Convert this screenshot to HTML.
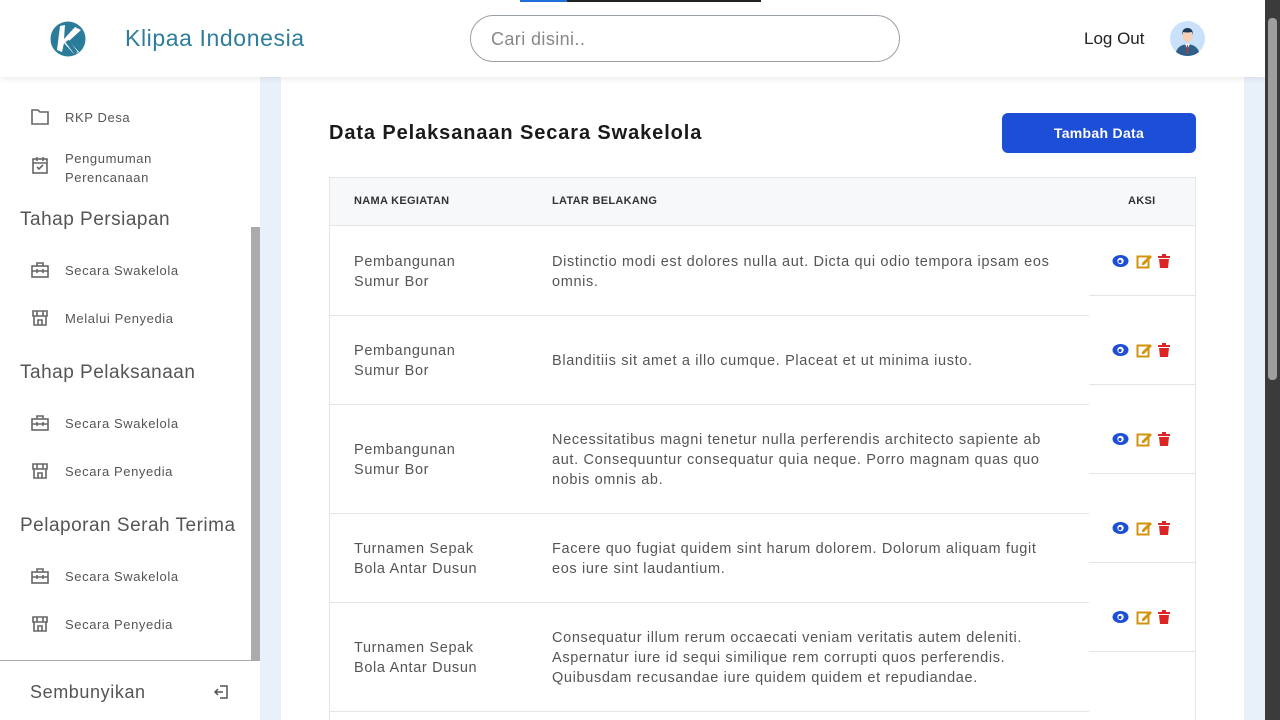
<!DOCTYPE html>
<html><head><meta charset="utf-8"><style>
*{box-sizing:border-box;margin:0;padding:0}
html,body{width:1280px;height:720px;overflow:hidden}
body{background:#e8f0fa;font-family:"Liberation Sans",sans-serif;position:relative;color:#333}
.a{position:absolute}
.hdr{left:0;top:0;width:1265px;height:77px;background:#fff;box-shadow:0 2px 6px rgba(0,0,0,.08);z-index:5}
.side{left:0;top:77px;width:260px;height:643px;background:#fff}
.main{left:281px;top:77px;width:963px;height:643px;background:#fff;overflow:hidden}
.si{font-size:13px;color:#555;letter-spacing:.6px}
.sh{font-size:19px;color:#555;left:20px;letter-spacing:.5px}
.ic{left:30px;width:20px;height:20px}
.t{font-size:14.5px;color:#555;line-height:20px;letter-spacing:.65px}
.hl{height:1px;background:#e2e5ea}
</style></head><body>
<div class="a" style="left:520px;top:0;width:47px;height:2px;background:#1e6fd9;z-index:9"></div>
<div class="a" style="left:567px;top:0;width:194px;height:2px;background:#222;z-index:9"></div>
<div class="a hdr">
  <svg class="a" style="left:50px;top:21px" width="36" height="36" viewBox="0 0 36 36"><circle cx="18" cy="18" r="17.5" fill="#2b7b9b"/><path d="M10 5 L15 4 L14 18 L25 6 L31 9 L19 20 L29 31 L24 33 L14 22 L12 31 L7 29 Z" fill="#fff"/><path d="M17 20 L26 32" stroke="#2b7b9b" stroke-width="4"/></svg>
  <div class="a" style="left:125px;top:25px;font-size:23px;color:#2e7d9c;letter-spacing:.6px">Klipaa Indonesia</div>
  <div class="a" style="left:470px;top:15px;width:430px;height:47px;border:1px solid #9aa0a8;border-radius:24px;"><span class="a" style="left:20px;top:13px;font-size:18px;color:#888;letter-spacing:.4px">Cari disini..</span></div>
  <div class="a" style="left:1084px;top:29px;font-size:17px;color:#222">Log Out</div>
  <svg class="a" style="left:1170px;top:21px" width="35" height="35" viewBox="0 0 35 35"><circle cx="17.5" cy="17.5" r="17.5" fill="#c9e1fb"/><path d="M6 31 Q8 24 17.5 23 Q27 24 29 31 Q24 35 17.5 35 Q11 35 6 31Z" fill="#2e5f8a"/><path d="M15 23 L17.5 28 L20 23Z" fill="#fff"/><path d="M17 24 L18 24 L18.5 31 L17.5 33 L16.5 31Z" fill="#c0392b"/><ellipse cx="17.5" cy="15" rx="5" ry="6" fill="#f6cfb7"/><path d="M12 14 Q12 7 17.5 7 Q23 7 23 14 L22 11 Q17 12 13 11Z" fill="#1e3a56"/></svg>
</div>
<div class="a" style="left:1265px;top:0;width:15px;height:720px;background:#3b3b3b"></div>
<div class="a" style="left:1268px;top:18px;width:9px;height:362px;background:#9e9e9e;border-radius:4px"></div>
<div class="a side">
  <div class="a" style="left:251px;top:150px;width:9px;height:433px;background:#ababab"></div>
  <svg class="a ic" style="top:30px" viewBox="0 0 20 20"><path d="M2 3h6l2 2h8v12H2z" fill="none" stroke="#666" stroke-width="1.6"/></svg>
  <div class="a si" style="left:65px;top:33px">RKP Desa</div>
  <svg class="a ic" style="top:78px" viewBox="0 0 20 20"><rect x="3" y="4" width="14" height="14" fill="none" stroke="#666" stroke-width="1.6"/><path d="M3 8h14M7 2v4M13 2v4M7 12l2 2 4-4" stroke="#666" stroke-width="1.6" fill="none"/></svg>
  <div class="a si" style="left:65px;top:72px;line-height:19px">Pengumuman<br>Perencanaan</div>
  <div class="a sh" style="top:132px">Tahap Persiapan</div>
  <svg class="a ic" style="top:183px" viewBox="0 0 20 20"><rect x="2" y="6" width="16" height="11" fill="none" stroke="#666" stroke-width="1.6"/><path d="M7 6V3h6v3M2 11h16M7 9v4M13 9v4" stroke="#666" stroke-width="1.6" fill="none"/></svg>
  <div class="a si" style="left:65px;top:186px">Secara Swakelola</div>
  <svg class="a ic" style="top:231px" viewBox="0 0 20 20"><path d="M3 3h14v5H3zM7 3v5M13 3v5M4 8v9h12V8M8 17v-5h4v5" stroke="#666" stroke-width="1.6" fill="none"/></svg>
  <div class="a si" style="left:65px;top:234px">Melalui Penyedia</div>
  <div class="a sh" style="top:285px">Tahap Pelaksanaan</div>
  <svg class="a ic" style="top:336px" viewBox="0 0 20 20"><rect x="2" y="6" width="16" height="11" fill="none" stroke="#666" stroke-width="1.6"/><path d="M7 6V3h6v3M2 11h16M7 9v4M13 9v4" stroke="#666" stroke-width="1.6" fill="none"/></svg>
  <div class="a si" style="left:65px;top:339px">Secara Swakelola</div>
  <svg class="a ic" style="top:384px" viewBox="0 0 20 20"><path d="M3 3h14v5H3zM7 3v5M13 3v5M4 8v9h12V8M8 17v-5h4v5" stroke="#666" stroke-width="1.6" fill="none"/></svg>
  <div class="a si" style="left:65px;top:387px">Secara Penyedia</div>
  <div class="a sh" style="top:438px">Pelaporan Serah Terima</div>
  <svg class="a ic" style="top:489px" viewBox="0 0 20 20"><rect x="2" y="6" width="16" height="11" fill="none" stroke="#666" stroke-width="1.6"/><path d="M7 6V3h6v3M2 11h16M7 9v4M13 9v4" stroke="#666" stroke-width="1.6" fill="none"/></svg>
  <div class="a si" style="left:65px;top:492px">Secara Swakelola</div>
  <svg class="a ic" style="top:537px" viewBox="0 0 20 20"><path d="M3 3h14v5H3zM7 3v5M13 3v5M4 8v9h12V8M8 17v-5h4v5" stroke="#666" stroke-width="1.6" fill="none"/></svg>
  <div class="a si" style="left:65px;top:540px">Secara Penyedia</div>
  <div class="a" style="left:0;top:583px;width:260px;height:60px;background:#fff;border-top:1px solid #aaa"></div>
  <div class="a" style="left:30px;top:605px;font-size:18px;color:#555;letter-spacing:.6px">Sembunyikan</div>
  <svg class="a" style="left:212px;top:606px" width="18" height="18" viewBox="0 0 18 18"><path d="M8 3h7v12H8M11 9H3M6 6L3 9l3 3" stroke="#555" stroke-width="1.5" fill="none"/></svg>
</div>
<div class="a main">
  <div class="a" style="left:48px;top:45px;font-size:20px;font-weight:bold;color:#1a1a1a;letter-spacing:.9px">Data Pelaksanaan Secara Swakelola</div>
  <div class="a" style="left:721px;top:36px;width:194px;height:40px;background:#1d4ed8;border-radius:6px;color:#fff;font-size:14px;font-weight:bold;text-align:center;line-height:40px;letter-spacing:.3px">Tambah Data</div>
  <div class="a" style="left:48px;top:100px;width:867px;height:543px;border:1px solid #e2e5ea;border-bottom:none"></div>
  <div class="a" style="left:49px;top:101px;width:865px;height:48px;background:#f7f8fa;border-bottom:1px solid #e2e5ea"></div>
  <div class="a" style="left:73px;top:118px;font-size:11px;font-weight:bold;color:#333;letter-spacing:.3px">NAMA KEGIATAN</div>
  <div class="a" style="left:271px;top:118px;font-size:11px;font-weight:bold;color:#333;letter-spacing:.3px">LATAR BELAKANG</div>
  <div class="a" style="left:847px;top:118px;font-size:11px;font-weight:bold;color:#333;letter-spacing:.3px">AKSI</div>
</div>
<div id="rows"></div>
<script>
var R=[[226,315,"Pembangunan<br>Sumur Bor","Distinctio modi est dolores nulla aut. Dicta qui odio tempora ipsam eos<br>omnis."],
[315,404,"Pembangunan<br>Sumur Bor","Blanditiis sit amet a illo cumque. Placeat et ut minima iusto."],
[404,513,"Pembangunan<br>Sumur Bor","Necessitatibus magni tenetur nulla perferendis architecto sapiente ab<br>aut. Consequuntur consequatur quia neque. Porro magnam quas quo<br>nobis omnis ab."],
[513,602,"Turnamen Sepak<br>Bola Antar Dusun","Facere quo fugiat quidem sint harum dolorem. Dolorum aliquam fugit<br>eos iure sint laudantium."],
[602,711,"Turnamen Sepak<br>Bola Antar Dusun","Consequatur illum rerum occaecati veniam veritatis autem deleniti.<br>Aspernatur iure id sequi similique rem corrupti quos perferendis.<br>Quibusdam recusandae iure quidem quidem et repudiandae."]];
var h="";
R.forEach(function(r,i){var c=(r[0]+r[1])/2+1;var lines=r[3].split("<br>").length;
h+='<div class="a t" style="left:354px;top:'+(c-20)+'px">'+r[2]+'</div>';
h+='<div class="a t" style="left:552px;top:'+(c-lines*10)+'px">'+r[3]+'</div>';
h+='<div class="a hl" style="left:330px;top:'+r[1]+'px;width:759px"></div>';
var ay=226+89*i;
h+='<div class="a hl" style="left:1089px;top:'+(ay+69)+'px;width:106px"></div>';
h+='<svg class="a" style="left:1112px;top:'+(ay+27)+'px" width="62" height="16" viewBox="0 0 62 16"><ellipse cx="8.5" cy="8" rx="8" ry="6" fill="#1d4ed8"/><circle cx="8.5" cy="8" r="3.2" fill="#fff"/><circle cx="8" cy="8.5" r="1.6" fill="#1d4ed8"/><rect x="25.5" y="3.5" width="11" height="11" fill="none" stroke="#d4930f" stroke-width="2"/><path d="M30 10l8-8 2 2-8 8h-2z" fill="#d4930f"/><rect x="46" y="3" width="12" height="2" fill="#dc2626"/><rect x="50" y="1" width="4" height="2" fill="#dc2626"/><path d="M47 6h10l-1 9h-8z" fill="#dc2626"/></svg>';
});
document.getElementById("rows").innerHTML=h;
</script>
</body></html>
